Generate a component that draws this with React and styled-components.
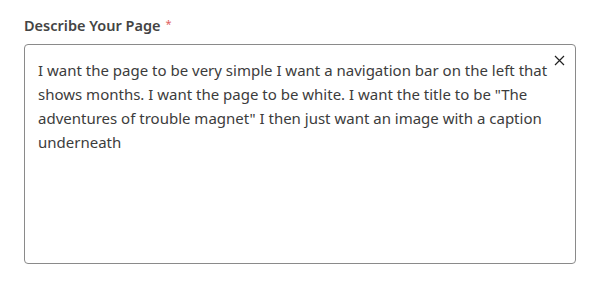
import React from 'react';
import styled, { createGlobalStyle } from 'styled-components';

const GlobalStyle = createGlobalStyle`
    body {
        margin: 0;
        background: #fff;
        font-family: "Noto Sans", "Open Sans", sans-serif;
    }
`;

const Page = styled.div`
    padding: 14px 32px 0 24px;
    width: 608px;
    box-sizing: border-box;
`;

const Label = styled.label`
    display: flex;
    align-items: flex-start;
    gap: 5px;
    font-size: 14.5px;
    font-weight: 600;
    color: #444;
    line-height: 22px;
    margin-bottom: 8px;
`;

const Required = styled.span`
    color: #e06060;
    font-size: 11px;
    font-weight: 400;
    line-height: 20px;
`;

const Field = styled.div`
    position: relative;
    height: 220px;
    border: 1px solid #8a8a8a;
    border-radius: 4px;
    box-sizing: border-box;
    padding: 13px 26px 0 13px;
`;

const Text = styled.div`
    font-size: 15px;
    line-height: 24px;
    color: #3c3c3c;
`;

const Clear = styled.button`
    position: absolute;
    top: 8px;
    right: 9px;
    width: 14px;
    height: 14px;
    padding: 0;
    border: 0;
    background: transparent;
    cursor: pointer;
    display: flex;
    align-items: center;
    justify-content: center;
`;

const App = () => {
    return (
        <>
            <GlobalStyle />
            <Page>
                <Label>
                    Describe Your Page <Required>*</Required>
                </Label>
                <Field>
                    <Text>
                        I want the page to be very simple I want a navigation bar on the left that
                        shows months. I want the page to be white. I want the title to be "The
                        adventures of trouble magnet" I then just want an image with a caption
                        underneath
                    </Text>
                    <Clear aria-label="Clear">
                        <svg width="11" height="11" viewBox="0 0 11 11">
                            <path d="M1 1 L10 10 M10 1 L1 10" stroke="#222" strokeWidth="1.2" />
                        </svg>
                    </Clear>
                </Field>
            </Page>
        </>
    );
};

export default App;
